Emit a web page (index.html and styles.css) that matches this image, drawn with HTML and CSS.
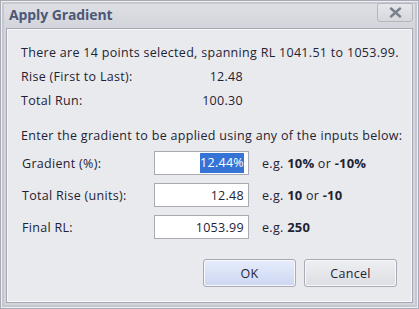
FILE: index.html
```html
<!DOCTYPE html>
<html lang="en">
  <head>
    <meta charset="utf-8" />
    <title>Apply Gradient</title>
    <link rel="stylesheet" href="styles.css">
  </head>
  <body>
    <div class="window">
      <div class="titlebar">
        <span class="title">Apply Gradient</span>
        <button class="close-btn" aria-label="Close">
          <svg width="13" height="11" viewBox="0 0 13 11">
            <path d="M2 1.5 L11 9.5 M11 1.5 L2 9.5" stroke="#7b7f8a" stroke-width="2.4" stroke-linecap="round" fill="none"/>
          </svg>
        </button>
      </div>

      <div class="panel">
        <div class="summary">There are 14 points selected, spanning RL 1041.51 to 1053.99.</div>
        <div class="info-row">
          <span class="info-label">Rise (First to Last):</span>
          <span class="info-value">12.48</span>
        </div>
        <div class="info-row info-last">
          <span class="info-label">Total Run:</span>
          <span class="info-value">100.30</span>
        </div>

        <div class="prompt">Enter the gradient to be applied using any of the inputs below:</div>

        <div class="field-row">
          <span class="field-label">Gradient (%):</span>
          <div class="field-box"><span class="selected">12.44%</span></div>
          <span class="hint">e.g. <b>10%</b> or <b>-10%</b></span>
        </div>
        <div class="field-row">
          <span class="field-label">Total Rise (units):</span>
          <div class="field-box">12.48</div>
          <span class="hint">e.g. <b>10</b> or <b>-10</b></span>
        </div>
        <div class="field-row">
          <span class="field-label">Final RL:</span>
          <div class="field-box">1053.99</div>
          <span class="hint">e.g. <b>250</b></span>
        </div>

        <div class="buttons">
          <button class="btn btn-ok">OK</button>
          <button class="btn">Cancel</button>
        </div>
      </div>
    </div>
  </body>
</html>
```

FILE: styles.css
```css
body {
  margin: 0;
  font-family: "Open Sans", "DejaVu Sans", sans-serif;
  font-size: 12.5px;
  letter-spacing: 0.3px;
  color: #1f2333;
}
.window {
  width: 419px;
  height: 309px;
  box-sizing: border-box;
  display: flex;
  flex-direction: column;
  background: linear-gradient(#dfe0e5, #d2d4db 30px, #d3d5dc);
  border: 1px solid #a8abb6;
  box-shadow: inset 0 0 0 1px #eceef2, inset 0 0 0 3px #c6c8d0;
}
.titlebar {
  height: 27px;
  display: flex;
  align-items: center;
  justify-content: space-between;
  padding: 0 5px 0 8px;
}
.title {
  font-weight: bold;
  font-size: 14px;
  color: #4c5877;
  letter-spacing: -0.1px;
}
.close-btn {
  width: 36px;
  height: 19px;
  margin-top: -5px;
  padding: 0;
  display: flex;
  align-items: center;
  justify-content: center;
  border: 1px solid #b3b6c0;
  border-radius: 3px;
  background: linear-gradient(#e6e7eb, #d5d7dd);
}
.panel {
  flex: 1;
  margin: 0 5px 5px 5px;
  padding: 11px 14px 0 14px;
  background-color: #e9eaee;
  border: 1px solid #a6a9b4;
  box-shadow: inset 0 0 0 1px #f6f7f9;
}
.summary,
.info-row,
.prompt {
  height: 24px;
  display: flex;
  align-items: center;
  white-space: nowrap;
}
.info-last {
  margin-bottom: 11px;
}
.info-label {
  width: 133px;
}
.info-value {
  width: 89px;
  text-align: right;
}
.prompt {
  margin-bottom: 4px;
}
.field-row {
  height: 24px;
  margin-bottom: 8px;
  display: flex;
  align-items: center;
  white-space: nowrap;
}
.field-label {
  width: 133px;
  padding-left: 1px;
  box-sizing: border-box;
}
.field-box {
  width: 95px;
  height: 24px;
  box-sizing: border-box;
  border: 1px solid #a9abb4;
  background: white;
  display: flex;
  align-items: center;
  justify-content: flex-end;
  padding-right: 4px;
}
.selected {
  background-color: #3673d6;
  color: white;
  line-height: 20px;
}
.hint {
  margin-left: 13px;
}
.hint b {
  font-size: 13px;
  letter-spacing: 0.2px;
}
.buttons {
  display: flex;
  justify-content: flex-end;
  gap: 8px;
  margin-top: 20px;
  padding-right: 1px;
}
.btn {
  width: 93px;
  height: 28px;
  font-family: inherit;
  font-size: 12.5px;
  letter-spacing: 0.3px;
  color: #1f2333;
  border: 1px solid #a8abb5;
  border-radius: 3px;
  background: linear-gradient(#eeeff2, #dcdee3);
  box-shadow: inset 0 0 0 1px #f8f8fa;
}
.btn-ok {
  background: linear-gradient(#e6ecfb, #cdd7f2);
}
```
